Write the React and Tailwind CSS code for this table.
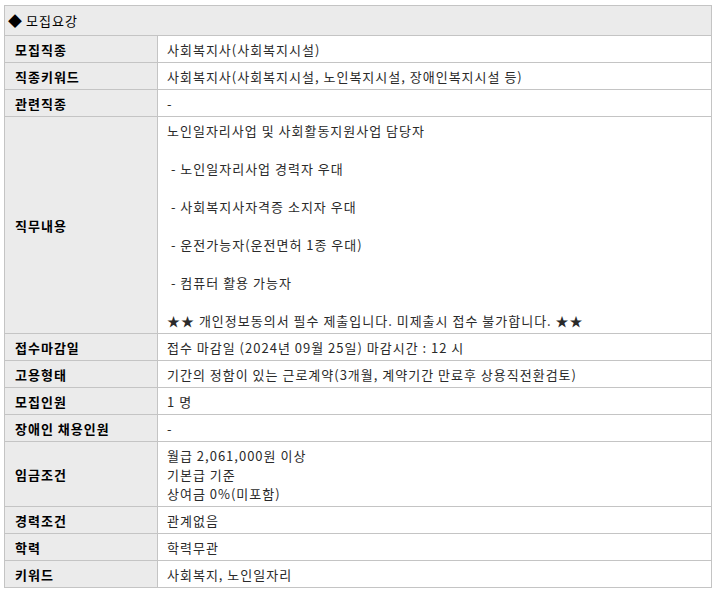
const rows = [
  { label: "모집직종", value: ["사회복지사(사회복지시설)"] },
  {
    label: "직종키워드",
    value: ["사회복지사(사회복지시설, 노인복지시설, 장애인복지시설 등)"],
  },
  { label: "관련직종", value: ["-"] },
  {
    label: "직무내용",
    value: [
      "노인일자리사업 및 사회활동지원사업 담당자",
      "",
      " - 노인일자리사업 경력자 우대",
      "",
      " - 사회복지사자격증 소지자 우대",
      "",
      " - 운전가능자(운전면허 1종 우대)",
      "",
      " - 컴퓨터 활용 가능자",
      "",
      "★★ 개인정보동의서 필수 제출입니다. 미제출시 접수 불가합니다. ★★",
    ],
  },
  { label: "접수마감일", value: ["접수 마감일 (2024년 09월 25일) 마감시간 : 12 시"] },
  {
    label: "고용형태",
    value: ["기간의 정함이 있는 근로계약(3개월, 계약기간 만료후 상용직전환검토)"],
  },
  { label: "모집인원", value: ["1 명"] },
  { label: "장애인 채용인원", value: ["-"] },
  {
    label: "임금조건",
    value: ["월급 2,061,000원 이상", "기본급 기준", "상여금 0%(미포함)"],
  },
  { label: "경력조건", value: ["관계없음"] },
  { label: "학력", value: ["학력무관"] },
  { label: "키워드", value: ["사회복지, 노인일자리"] },
];

export default function App() {
  return (
    <div
      className="bg-white min-h-[595px] pt-[5px] pl-[4px] text-[13px] leading-[19px] tracking-[1px] text-[#2a2a2a]"
      style={{ fontFamily: '"Noto Sans CJK KR", "Noto Sans", sans-serif' }}
    >
      <div className="w-[708px] border border-[#c4c4c4]">
        {/* 헤더 */}
        <div className="h-[30px] flex items-center gap-[3px] pl-[3px] bg-[#ebebeb] border-b border-[#c4c4c4] text-black">
          <span className="text-[14px]">◆</span>
          <span>모집요강</span>
        </div>

        {rows.map(({ label, value }, i) => (
          <div
            key={label}
            className={`grid grid-cols-[153px_1fr] ${
              i < rows.length - 1 ? "border-b border-[#c4c4c4]" : ""
            }`}
          >
            <div className="bg-[#ebebeb] border-r border-[#c4c4c4] pl-[10px] pt-[4px] pb-[3px] flex items-center font-bold text-black">
              {label}
            </div>
            <div className="pl-[9px] pt-[4px] pb-[3px] whitespace-pre">
              {value.map((line, j) => (
                <div key={j} className="h-[19px]">
                  {line}
                </div>
              ))}
            </div>
          </div>
        ))}
      </div>
    </div>
  );
}
